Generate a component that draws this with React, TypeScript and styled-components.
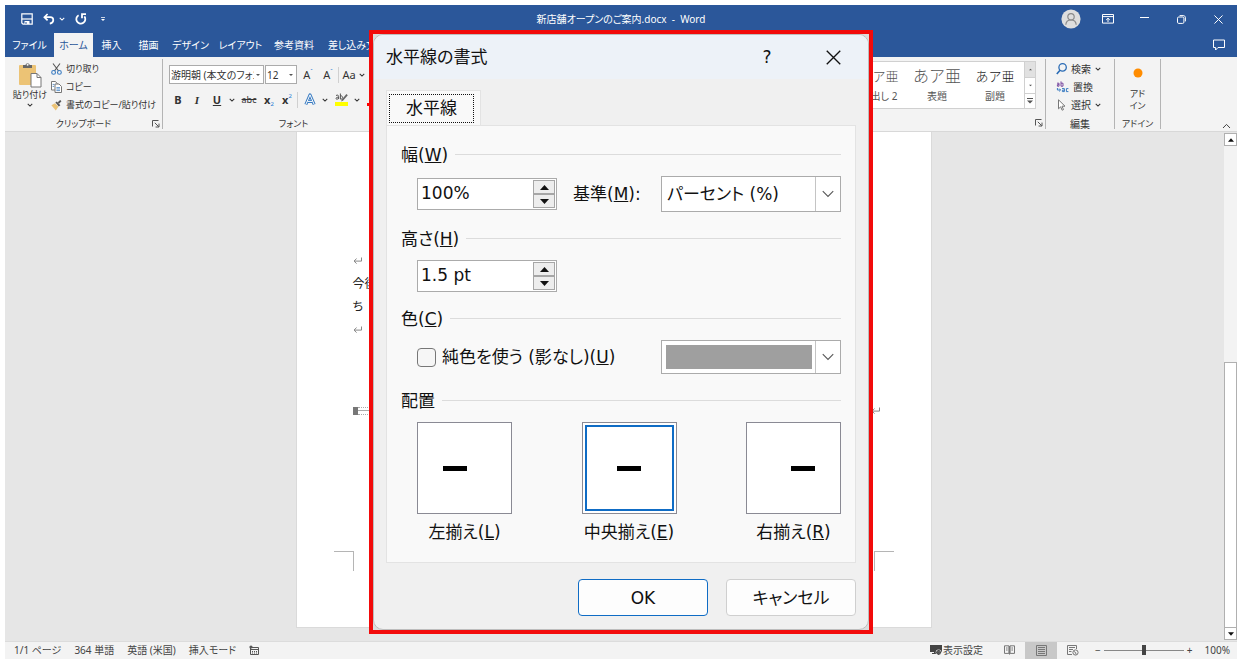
import React, { useState } from "react";
import styled, { createGlobalStyle, css } from "styled-components";

const GlobalStyle = createGlobalStyle`
  *, *::before, *::after { box-sizing: border-box; }
  body { margin: 0; background: #fff; }
  body, button, input, select {
    font-family: "Noto Sans", "Noto Sans CJK JP", sans-serif;
    font-feature-settings: "palt";
  }
  button { border: 0; padding: 0; background: none; color: inherit; font-size: inherit; line-height: inherit; }
  h1, h2, p { margin: 0; font-weight: 400; }
`;

const Desktop = styled.div`
  display: flex;
  min-height: 100vh;
  padding: 5px 7px 5px 5px;
`;

const AppWindow = styled.div`
  position: relative;
  flex: 1;
  min-width: 0;
  display: flex;
  flex-direction: column;
  background: #e6e6e6;
  color: #333;
  font-size: 10px;
  line-height: 14px;
  overflow: hidden;
`;

/* Title bar and tabs */
const Header = styled.header`
  background: #2b579a;
  color: #fff;
`;

const TitleRow = styled.div`
  display: grid;
  grid-template-columns: 1fr auto 1fr;
  align-items: center;
  height: 28px;
`;

const QuickAccess = styled.div`
  display: flex;
  align-items: center;
  gap: 10px;
  padding-left: 16px;
`;

const WindowControls = styled.div`
  display: flex;
  align-items: center;
  justify-content: flex-end;
`;

const IconButton = styled.button<{ $width?: number; $gap?: number }>`
  display: flex;
  align-items: center;
  justify-content: center;
  flex: none;
  gap: ${(p) => p.$gap ?? 0}px;
  width: ${(p) => (p.$width ? p.$width + "px" : "auto")};
`;

const Avatar = styled.button`
  display: flex;
  margin-right: 8px;
`;

const TabRow = styled.div`
  display: flex;
  align-items: stretch;
  height: 24px;
`;

const TabList = styled.nav`
  flex: 1;
  display: grid;
  grid-template-columns: 49px 39px 37px 37px 47px 53px 54px 62px;
`;

const RibbonTab = styled.button<{ $active?: boolean }>`
  display: flex;
  align-items: center;
  justify-content: center;
  white-space: nowrap;
  ${(p) => p.$active && css`background: #f3f3f3; color: #2b579a;`}
`;

/* Ribbon */
const Ribbon = styled.div`
  display: flex;
  height: 75px;
  padding-top: 2px;
  background: #f3f3f3;
  border-bottom: 1px solid #d8d8d8;
`;

const Group = styled.section<{ $width?: number; $line?: boolean }>`
  display: flex;
  flex-direction: column;
  flex: none;
  width: ${(p) => (p.$width ? p.$width + "px" : "auto")};
  margin-bottom: 2px;
  border-right: ${(p) => (p.$line ? "1px solid #b4b4b4" : "0")};
`;

const GroupBody = styled.div`
  flex: 1;
  display: flex;
`;

const GroupLabel = styled.div<{ $small?: boolean }>`
  display: grid;
  grid-template-columns: 1fr auto 1fr;
  align-items: center;
  height: 12px;
  font-size: ${(p) => (p.$small ? 9 : 10)}px;
  white-space: nowrap;
  span { grid-column: 2; }
  button { grid-column: 3; justify-self: end; padding-right: 2px; }
`;

const Spacer = styled.div`
  flex: 1;
`;

const PasteButton = styled.button`
  display: flex;
  flex-direction: column;
  align-items: center;
  width: 42px;
  margin-left: 4px;
  padding-top: 3px;
  font-size: 9px;
  white-space: nowrap;
`;

const CommandList = styled.div<{ $indent: number; $size: number }>`
  display: flex;
  flex-direction: column;
  padding: 1px 0 0 ${(p) => p.$indent}px;
  font-size: ${(p) => p.$size}px;
`;

const Command = styled.button<{ $spread?: boolean }>`
  display: flex;
  align-items: center;
  gap: 4px;
  height: 18px;
  white-space: nowrap;
`;

const FontPanel = styled.div`
  display: flex;
  flex-direction: column;
  padding: 6px 0 0 6px;
  gap: 6px;
`;

const FontRow = styled.div`
  display: flex;
  align-items: center;
  height: 19px;
`;

const Combo = styled.div<{ $width: number }>`
  display: flex;
  align-items: center;
  width: ${(p) => p.$width}px;
  height: 19px;
  margin-right: 1px;
  padding-right: 3px;
  border: 1px solid #ababab;
  background: #fff;
`;

const ComboInput = styled.input`
  flex: 1;
  width: 100%;
  min-width: 0;
  margin-right: 2px;
  padding: 0 0 0 1px;
  border: 0;
  outline: 0;
  background: transparent;
  color: #333;
  font-size: 10px;
`;

const Divider = styled.span`
  flex: none;
  width: 1px;
  height: 16px;
  background: #d0d0d0;
`;

const FormatButton = styled.button<{ $width: number }>`
  flex: none;
  width: ${(p) => p.$width}px;
  display: flex;
  align-items: center;
  justify-content: center;
  font-size: 11px;
  b, em, u { font-weight: 700; }
  s { font-size: 9px; }
  em { font-family: "Liberation Serif", serif; }
  sub, sup { font-size: 6px; color: #2b7cd3; line-height: 6px; }
  sub { align-self: flex-end; }
  sup { align-self: flex-start; }
`;

const FontColor = styled.span`
  width: 13px;
  border-bottom: 3px solid #f00;
  line-height: 10px;
`;

const Gallery = styled.div`
  display: flex;
  height: 48px;
  margin: 2px 9px 0 0;
  border: 1px solid #d0d0d0;
  background: #fff;
`;

const StyleItem = styled.button`
  display: flex;
  flex-direction: column;
  align-items: center;
  width: 58px;
  padding-top: 4px;
  white-space: nowrap;
  color: #555;
`;

const StyleSample = styled.span<{ $size: number; $dark?: boolean }>`
  height: 23px;
  font-size: ${(p) => p.$size}px;
  line-height: 20px;
  font-weight: 300;
  font-feature-settings: normal;
  color: ${(p) => (p.$dark ? "#222" : "#555")};
`;

const GalleryScroll = styled.div`
  display: grid;
  grid-template-rows: 1fr 1fr 1fr;
  width: 11px;
  border-left: 1px solid #d0d0d0;
  button { display: flex; align-items: center; justify-content: center; }
  button + button { border-top: 1px solid #d0d0d0; }
  button:first-child { background: #e1e1e1; }
`;

const AddIn = styled.button`
  display: flex;
  flex-direction: column;
  align-items: center;
  width: 100%;
  padding-top: 9px;
  font-size: 9px;
  line-height: 12px;
  svg { margin-bottom: 10px; }
`;

const CollapseArea = styled.div`
  display: flex;
  align-items: flex-end;
  justify-content: flex-end;
  width: 76px;
  padding: 0 6px 2px 0;
`;

/* Document */
const Workspace = styled.main`
  flex: 1;
  display: flex;
`;

const Canvas = styled.div`
  flex: 1;
  display: flex;
  justify-content: center;
  padding-bottom: 13px;
`;

const Page = styled.article`
  width: 636px;
  padding: 117px 0 56px;
  border: 1px solid #dadada;
  border-top: 0;
  background: #fff;
  color: #222;
  font-size: 12px;
  line-height: 23px;
`;

const DocLine = styled.p`
  display: flex;
  align-items: center;
  height: 23px;
  margin: 0 50px 0 56px;
`;

const RuleLine = styled(DocLine)`
  margin-top: 58px;
`;

const Handle = styled.span`
  flex: none;
  width: 5px;
  height: 8px;
  background: #777;
`;

const Rule = styled.span`
  flex: 1;
  height: 8px;
  background: linear-gradient(#aaa, #aaa) center / 100% 1px no-repeat;
  border-top: 1px dotted #aaa;
  border-bottom: 1px dotted #aaa;
`;

const CropMarks = styled.div`
  display: flex;
  justify-content: space-between;
  margin: 129px 37px 0;
`;

const CropMark = styled.span<{ $side: "left" | "right" }>`
  width: 20px;
  height: 20px;
  border-top: 1px solid #b5b5b5;
  border-${(p) => (p.$side === "left" ? "right" : "left")}: 1px solid #b5b5b5;
`;

const Scrollbar = styled.div`
  display: flex;
  flex-direction: column;
  width: 15px;
  padding: 1px 0 1px 2px;
`;

const ScrollArrow = styled.button`
  display: flex;
  align-items: center;
  justify-content: center;
  height: 13px;
  border: 1px solid #b0b0b0;
  background: #fff;
`;

const ScrollTrack = styled.div`
  flex: 218;
  background: #f3f3f3;
`;

const ScrollThumb = styled.div`
  flex: 266;
  border: 1px solid #b0b0b0;
  border-bottom: 0;
  background: #fff;
`;

/* Status bar */
const StatusBar = styled.footer`
  display: flex;
  align-items: center;
  height: 18px;
  padding: 0 7px 1px 9px;
  border-top: 1px solid #dcdcdc;
  background: #f3f3f3;
  color: #444;
  white-space: nowrap;
`;

const StatusItems = styled.div`
  flex: 1;
  display: flex;
  align-items: center;
  gap: 13px;
`;

const ViewButton = styled.button<{ $active?: boolean }>`
  display: flex;
  align-items: center;
  justify-content: center;
  width: 32px;
  height: 17px;
  background: ${(p) => (p.$active ? "#c8c8c8" : "transparent")};
`;

const DisplaySettings = styled.button`
  display: flex;
  align-items: center;
  gap: 1px;
  margin-right: 10px;
`;

const ZoomGroup = styled.div`
  display: flex;
  align-items: center;
  padding-left: 6px;
`;

const ZoomSlider = styled.input`
  appearance: none;
  width: 80px;
  height: 12px;
  margin: 0 3px;
  background: linear-gradient(#888, #888) center / 100% 1px no-repeat;
  &::-webkit-slider-thumb {
    appearance: none;
    width: 4px;
    height: 10px;
    background: #444;
  }
`;

const ZoomValue = styled.button`
  margin-left: 12px;
`;

/* Dialog */
const Overlay = styled.div`
  position: absolute;
  inset: 0;
  display: flex;
  justify-content: center;
  align-items: flex-start;
  padding-top: 25px;
`;

const Highlight = styled.div`
  width: 504px;
  border: 4px solid #f20a0a;
  background: #dcdcdc;
`;

const Dialog = styled.div`
  border: 1px solid #bdbdbd;
  border-radius: 10px;
  background: #f0f0f0;
  color: #111;
  font-size: 17px;
  line-height: 24px;
  overflow: hidden;
  &, button, input, select {
    font-family: "DejaVu Sans", "Noto Sans CJK JP", sans-serif;
  }
`;

const DialogTitle = styled.div`
  display: flex;
  align-items: center;
  height: 44px;
  padding: 0 2px 0 12px;
  background: #edf2f8;
  h1 { flex: 1; font-size: 17px; }
`;

const DialogTabs = styled.div`
  display: flex;
  padding: 11px 12px 0;
`;

const DialogTab = styled.button`
  width: 95px;
  height: 35px;
  padding: 3px 6px 2px 2px;
  border: 1px solid #e3e3e3;
  border-bottom: 0;
  background: #f9f9f9;
  span {
    display: block;
    height: 29px;
    border: 1px dotted #111;
    line-height: 27px;
  }
`;

const Panel = styled.div`
  display: flex;
  flex-direction: column;
  gap: 15px;
  margin: 0 12px;
  padding: 17px 14px 18px;
  border: 1px solid #e3e3e3;
  background: #f9f9f9;
`;

const SectionTitle = styled.h2`
  display: flex;
  align-items: center;
  gap: 7px;
  height: 24px;
  margin-bottom: 9px;
  font-size: 17px;
  &::after {
    content: "";
    flex: 1;
    height: 1px;
    margin-bottom: 2px;
    background: #dcdcdc;
  }
`;

const FieldRow = styled.div`
  display: flex;
  align-items: center;
  padding-left: 16px;
`;

const Spinner = styled.div`
  display: flex;
  width: 140px;
  height: 32px;
  padding: 1px;
  border: 1px solid #ababab;
  background: #fff;
`;

const SpinnerInput = styled.input`
  flex: 1;
  min-width: 0;
  padding: 0 2px 2px;
  border: 0;
  outline: 0;
  background: transparent;
  color: #111;
  font-size: 17px;
`;

const SpinnerArrows = styled.div`
  display: grid;
  grid-template-rows: 1fr 1fr;
  width: 22px;
  button {
    display: flex;
    align-items: center;
    justify-content: center;
    border: 1px solid #a6a6a6;
    background: #ededed;
  }
`;

const FieldLabel = styled.label`
  flex: 1;
  padding-left: 16px;
`;

const DropFrame = styled.div<{ $height: number }>`
  position: relative;
  display: flex;
  width: 180px;
  height: ${(p) => p.$height}px;
  border: 1px solid #ababab;
  background: #fff;
`;

const Select = styled.select`
  appearance: none;
  width: 100%;
  padding: 0 26px 0 5px;
  border: 0;
  outline: 0;
  background: transparent;
  color: #111;
  font-size: 17px;
`;

const DropArrow = styled.span`
  position: absolute;
  top: 0;
  right: 0;
  bottom: 0;
  display: flex;
  align-items: center;
  justify-content: center;
  width: 25px;
  border-left: 1px solid #c4c4c4;
  pointer-events: none;
`;

const ColorButton = styled.button`
  flex: 1;
  padding: 4px 28px 4px 4px;
  span { display: block; height: 100%; background: #9f9f9f; }
`;

const CheckLabel = styled.label`
  flex: 1;
  display: flex;
  align-items: center;
  gap: 6px;
  white-space: nowrap;
`;

const Checkbox = styled.input`
  appearance: none;
  width: 19px;
  height: 19px;
  margin: 0;
  border: 1px solid #777;
  border-radius: 4px;
  background: #f6f6f6;
  &:checked { background: #0067c0; }
`;

const AlignRow = styled.div`
  display: flex;
  justify-content: space-between;
  padding-left: 16px;
`;

const AlignOption = styled.label`
  display: flex;
  flex-direction: column;
  align-items: center;
  gap: 6px;
  width: 95px;
  white-space: nowrap;
`;

const HiddenRadio = styled.input`
  position: absolute;
  opacity: 0;
`;

const AlignBox = styled.span<{ $align: string; $selected: boolean }>`
  display: flex;
  align-items: center;
  justify-content: ${(p) => p.$align};
  width: 95px;
  height: 92px;
  padding: 0 25px;
  border: 1px solid #8a8a94;
  background: #fff;
  ${(p) => p.$selected && css`
    outline: 2px solid #0f6cc5;
    outline-offset: -5px;
  `}
  &::before {
    content: "";
    width: 24px;
    height: 5px;
    background: #000;
  }
`;

const DialogFooter = styled.div`
  display: flex;
  justify-content: flex-end;
  gap: 18px;
  padding: 16px 12px 13px;
`;

const PushButton = styled.button<{ $primary?: boolean }>`
  width: 130px;
  height: 37px;
  border: 1px solid ${(p) => (p.$primary ? "#0f6cc5" : "#cfcfcf")};
  border-radius: 4px;
  background: #fdfdfd;
`;

/* Icons */
const Chevron = ({ w = 6, color = "currentColor" }: { w?: number; color?: string }) => (
  <svg width={w} height={w} viewBox="0 0 8 8" fill="none" stroke={color} strokeWidth={w > 8 ? 0.6 : 1.4}>
    <path d="M1 2.4 4 5.4 7 2.4" />
  </svg>
);

const Triangle = ({ up, w = 5 }: { up?: boolean; w?: number }) => (
  <svg width={w} height={w} viewBox="0 0 10 10" fill={w < 5 ? "#555" : "#111"}>
    <path d={up ? "M5 2.2 10 7.8H0z" : "M5 7.8 0 2.2h10z"} />
  </svg>
);

const SaveIcon = () => (
  <svg width="12" height="12" viewBox="0 0 12 12" fill="none" stroke="#fff">
    <path d="M.8.8h10.4v10.4H2L.8 10z" strokeWidth="1.2" />
    <path d="M1 6h10" strokeWidth="1.2" />
    <path d="M3.5 8h5v3h-5z" fill="#fff" stroke="none" />
    <path d="M5 9v2" stroke="#2b579a" />
  </svg>
);

const UndoIcon = () => (
  <svg width="12" height="12" viewBox="0 0 12 12" fill="none" stroke="#fff" strokeWidth="1.7">
    <path d="M4.6 1 1.4 4.2l3.2 3.2M1.6 4.2h5.6c4.2.2 4.2 5.4-.4 6.4" />
  </svg>
);

const RedoIcon = () => (
  <svg width="12" height="12" viewBox="0 0 12 12" fill="none" stroke="#fff" strokeWidth="1.8">
    <path d="M3.6 2.2A4.5 4.5 0 1 0 9.4 3.4" />
    <path d="M11 1.2H7v4" />
  </svg>
);

const CustomizeIcon = () => (
  <svg width="4" height="6" viewBox="0 0 5 7" fill="#fff">
    <path d="M0 1h5v1H0zM0 3.6h5L2.5 6z" />
  </svg>
);

const AvatarIcon = () => (
  <svg width="20" height="20" viewBox="0 0 20 20" fill="none" stroke="#8a8a8a" strokeWidth="1.2">
    <circle cx="10" cy="10" r="9.6" fill="#dedede" stroke="none" />
    <circle cx="10" cy="7.8" r="3.2" />
    <path d="M4.8 15.8c.4-6.4 10-6.4 10.4 0" />
  </svg>
);

const RibbonDisplayIcon = () => (
  <svg width="12" height="10" viewBox="0 0 12 10" fill="none" stroke="#fff">
    <path d="M.5.5h11v8.6H.5zM.5 2.6h11M6 8V4.4M4.2 5.9 6 4.2l1.8 1.7" />
  </svg>
);

const MinimizeIcon = () => (
  <svg width="9" height="9" viewBox="0 0 9 9" stroke="#fff"><path d="M0 2.5h9" /></svg>
);

const RestoreIcon = () => (
  <svg width="9" height="9" viewBox="0 0 9 9" fill="none" stroke="#fff">
    <rect x=".5" y="2" width="6.4" height="6.4" rx="1.2" />
    <path d="M2.6.6h3.6c1.4 0 2.2.8 2.2 2.2v3.6" />
  </svg>
);

const CloseIcon = ({ size = 9, color = "#fff" }: { size?: number; color?: string }) => (
  <svg width={size} height={size} viewBox="0 0 10 10" stroke={color} strokeWidth={size > 10 ? 0.9 : 1.1}>
    <path d="M.5.5l9 9M9.5.5l-9 9" />
  </svg>
);

const CommentIcon = () => (
  <svg width="12" height="12" viewBox="0 0 12 12" fill="none" stroke="#fff">
    <path d="M.5 1h11v7.5H5L2.6 11V8.5H.5z" />
  </svg>
);

const PasteIcon = () => (
  <svg width="24" height="26" viewBox="0 0 24 26">
    <rect x="1" y="3" width="17" height="20" rx="1" fill="#ecc375" />
    <path d="M5 6V3h2.4a2.3 2.3 0 0 1 4.4 0H14v3z" fill="#666" />
    <circle cx="9.6" cy="2.8" r="1" fill="#f3f3f3" />
    <path d="M13 11.5h6l4 4v9.5H13z" fill="#fff" stroke="#777" />
    <path d="M19 11.5v4h4" fill="none" stroke="#777" />
  </svg>
);

const CutIcon = () => (
  <svg width="11" height="12" viewBox="0 0 11 12" fill="none">
    <path d="M2 .5 7.6 8M9 .5 3.4 8" stroke="#555" strokeWidth="1.1" />
    <circle cx="2.6" cy="9.4" r="1.9" stroke="#3a7cc2" strokeWidth="1.1" />
    <circle cx="8.4" cy="9.4" r="1.9" stroke="#3a7cc2" strokeWidth="1.1" />
  </svg>
);

const CopyIcon = () => (
  <svg width="11" height="12" viewBox="0 0 11 12" fill="#fff" stroke="#777">
    <path d="M.5.5h4L6.5 3v6h-6z" />
    <path d="M4 3h4l2.5 2.5v6H4z" />
    <path d="M5.4 6.6h3.6M5.4 8h3.6M5.4 9.6h3.6" stroke="#3a7cc2" strokeWidth=".8" />
    <path d="M1.6 3.4h1.8M1.6 5.4h1.6" stroke="#3a7cc2" strokeWidth=".8" />
  </svg>
);

const BrushIcon = () => (
  <svg width="11" height="11" viewBox="0 0 11 11">
    <path d="M.4 5.2 4 3.2l3.4 3.6L4.8 10.6z" fill="#ecc375" />
    <path d="m4.4 2.6 1.4-1 3.6 3.6-1.6 1.2z" fill="#555" />
    <path d="m7.4 3 2.4-2.4" stroke="#555" strokeWidth="1.8" />
  </svg>
);

const LauncherIcon = () => (
  <svg width="8" height="8" viewBox="0 0 8 8" fill="none" stroke="#555">
    <path d="M.5 6.5v-6h6M2.8 2.8l4 4M7 3.6V7H3.6" />
  </svg>
);

const TextEffectIcon = () => (
  <svg width="12" height="13" viewBox="0 0 12 13" fill="none" strokeLinejoin="round">
    <path d="M1.8 11.5 6 1.8l4.2 9.7M3.4 8.4h5.2" stroke="#3a7cc2" strokeWidth="3" />
    <path d="M1.8 11.5 6 1.8l4.2 9.7M3.4 8.4h5.2" stroke="#fff" strokeWidth="1" />
  </svg>
);

const HighlighterIcon = () => (
  <svg width="13" height="15" viewBox="0 0 13 15">
    <rect x="0" y="10" width="13" height="4" fill="#ffff00" />
    <path d="M1 3.5c2-1 2.6 0 2.6 1v2.6M3.6 5.2C.4 5 .6 7.4 2 7.2c.8 0 1.6-.8 1.6-1.4M5.4 1.5v5.6c2.8.6 2.8-4 0-3.2" fill="none" stroke="#555" />
    <path d="m6 9.4 1-2.2L11.4 2l1.4 1.2-4.6 5.4z" fill="#666" />
  </svg>
);

const SearchIcon = () => (
  <svg width="11" height="12" viewBox="0 0 11 12" fill="none" stroke="#2b6cb5" strokeWidth="1.3">
    <circle cx="6.6" cy="4.4" r="3.7" /><path d="M4 7.2.8 11" strokeWidth="1.6" />
  </svg>
);

const ReplaceIcon = () => (
  <svg width="13" height="12" viewBox="0 0 13 12" fill="none" strokeWidth="1">
    <path d="M1 2.2h2v3H1.4v-1.6H3M5 .4v4.8h2v-3H5" stroke="#7a4aa0" />
    <path d="M1.4 7v2h3M3.2 7.6l1.4 1.4-1.4 1.4" stroke="#3a7cc2" />
    <path d="M6 7.6h2.4v3H6.4V9.2h2M12.4 7.6h-2v3h2" stroke="#3a7cc2" />
  </svg>
);

const CursorIcon = () => (
  <svg width="11" height="12" viewBox="0 0 11 12" fill="#fff" stroke="#777">
    <path d="M2.5.8v9l2.2-2 1.4 3.4 1.4-.6L6 7.2h3z" />
  </svg>
);

const ReturnMark = () => (
  <svg width="10" height="8" viewBox="0 0 10 8" fill="none" stroke="#888">
    <path d="M8.5.5v3.6H1M3.6 1.6 1 4.1l2.6 2.5" />
  </svg>
);

const MacroIcon = () => (
  <svg width="11" height="11" viewBox="0 0 11 11" fill="none" stroke="#555">
    <path d="M1.5 2.5h8v7h-8zM1.5 4.5h8M3 6.5h1M5 6.5h1M7 6.5h1M3 8h1M5 8h1M7 8h1" />
    <circle cx="2" cy="2" r="1.6" fill="#555" stroke="none" />
  </svg>
);

const MonitorIcon = () => (
  <svg width="12" height="12" viewBox="0 0 12 12">
    <path d="M0 1h12v7H7v2H2V9h2V8H0z" fill="#444" />
    <circle cx="8.6" cy="8.4" r="2.9" fill="#f3f3f3" />
    <circle cx="8.6" cy="8.4" r="1.7" fill="none" stroke="#444" strokeWidth="1.3" />
    <path d="M8.6 5.8v5.2M6 8.4h5.2" stroke="#444" strokeWidth=".8" />
  </svg>
);

const BookIcon = () => (
  <svg width="11" height="10" viewBox="0 0 11 10" fill="none" stroke="#777">
    <path d="M.5.8h4.4v7.6H.5zM6.1.8h4.4v7.6H6.1zM5.5 1v8.6M2 3h1.6M2 5h1.6M7.4 3H9M7.4 5H9" />
  </svg>
);

const PrintLayoutIcon = () => (
  <svg width="11" height="11" viewBox="0 0 11 11" fill="none" stroke="#777">
    <path d="M.5.5h10v10H.5zM2 2.5h7M2 4.5h7M2 6.5h7M2 8.5h7" />
  </svg>
);

const WebLayoutIcon = () => (
  <svg width="12" height="11" viewBox="0 0 12 11" fill="none" stroke="#777">
    <path d="M5 9.5H.5v-9h9V4M2 2.5h6M2 4.5h4M2 6.5h2.5" />
    <circle cx="8.5" cy="7.5" r="2.6" /><path d="M7 6.5l1.6 1 .4 2" />
  </svg>
);

const ribbonTabs = ["ファイル", "ホーム", "挿入", "描画", "デザイン", "レイアウト", "参考資料", "差し込み文"];

const alignments = [
  { id: "left", text: "左揃え", accessKey: "L", justify: "flex-start" },
  { id: "center", text: "中央揃え", accessKey: "E", justify: "center" },
  { id: "right", text: "右揃え", accessKey: "R", justify: "flex-end" },
];

const Key = ({ children }: { children: string }) => <>(<u>{children}</u>)</>;

const NumberField = ({ label, initial }: { label: string; initial: string }) => {
  const [value, setValue] = useState(initial);
  const step = (d: number) => setValue((v) => v.replace(/^[\d.]+/, (n) => String(Math.max(0, Number(n) + d))));
  return (
    <Spinner>
      <SpinnerInput aria-label={label} value={value} onChange={(e) => setValue(e.target.value)} />
      <SpinnerArrows>
        <button aria-label={`${label} +`} onClick={() => step(1)}><Triangle up w={9} /></button>
        <button aria-label={`${label} -`} onClick={() => step(-1)}><Triangle w={9} /></button>
      </SpinnerArrows>
    </Spinner>
  );
};

function RuleDialog() {
  const [align, setAlign] = useState("center");
  return (
    <Dialog role="dialog" aria-labelledby="dialog-title">
      <DialogTitle>
        <h1 id="dialog-title">水平線の書式</h1>
        <IconButton $width={66}>?</IconButton>
        <IconButton $width={66} aria-label="閉じる"><CloseIcon size={15} color="#111" /></IconButton>
      </DialogTitle>
      <DialogTabs role="tablist">
        <DialogTab role="tab" aria-selected><span>水平線</span></DialogTab>
      </DialogTabs>
      <Panel>
        <section>
          <SectionTitle><span>幅<Key>W</Key></span></SectionTitle>
          <FieldRow>
            <NumberField label="幅" initial="100%" />
            <FieldLabel htmlFor="basis">基準<Key>M</Key>:</FieldLabel>
            <DropFrame $height={36}>
              <Select id="basis"><option>パーセント (%)</option></Select>
              <DropArrow><Chevron w={14} color="#555" /></DropArrow>
            </DropFrame>
          </FieldRow>
        </section>
        <section>
          <SectionTitle><span>高さ<Key>H</Key></span></SectionTitle>
          <FieldRow><NumberField label="高さ" initial="1.5 pt" /></FieldRow>
        </section>
        <section>
          <SectionTitle><span>色<Key>C</Key></span></SectionTitle>
          <FieldRow>
            <CheckLabel>
              <Checkbox type="checkbox" />
              <span>純色を使う (影なし)<Key>U</Key></span>
            </CheckLabel>
            <DropFrame $height={34}>
              <ColorButton aria-label="色" aria-haspopup="listbox"><span /></ColorButton>
              <DropArrow><Chevron w={14} color="#555" /></DropArrow>
            </DropFrame>
          </FieldRow>
        </section>
        <section>
          <SectionTitle><span>配置</span></SectionTitle>
          <AlignRow>
            {alignments.map((a) => (
              <AlignOption key={a.id}>
                <HiddenRadio type="radio" name="align" checked={align === a.id} onChange={() => setAlign(a.id)} />
                <AlignBox $align={a.justify} $selected={align === a.id} />
                <span>{a.text}<Key>{a.accessKey}</Key></span>
              </AlignOption>
            ))}
          </AlignRow>
        </section>
      </Panel>
      <DialogFooter>
        <PushButton $primary>OK</PushButton>
        <PushButton>キャンセル</PushButton>
      </DialogFooter>
    </Dialog>
  );
}

function RibbonBar() {
  return (
    <Ribbon>
      <Group $width={158} $line>
        <GroupBody>
          <PasteButton><PasteIcon />貼り付け<Chevron /></PasteButton>
          <CommandList $indent={0} $size={9}>
            <Command><CutIcon />切り取り</Command>
            <Command><CopyIcon />コピー</Command>
            <Command><BrushIcon />書式のコピー/貼り付け</Command>
          </CommandList>
        </GroupBody>
        <GroupLabel $small><span>クリップボード</span><IconButton aria-label="クリップボード"><LauncherIcon /></IconButton></GroupLabel>
      </Group>
      <Group $width={262} $line>
        <GroupBody>
          <FontPanel>
            <FontRow>
              <Combo $width={95}><ComboInput aria-label="フォント" defaultValue="游明朝 (本文のフォント)" /><Triangle w={4} /></Combo>
              <Combo $width={32}><ComboInput aria-label="フォント サイズ" defaultValue="12" /><Triangle w={4} /></Combo>
              <FormatButton $width={20}>A<sup>ˆ</sup></FormatButton>
              <FormatButton $width={20}>A<sup>ˇ</sup></FormatButton>
              <Divider />
              <FormatButton $width={20}>Aa</FormatButton>
              <Chevron />
            </FontRow>
            <FontRow>
              <FormatButton $width={18}><b>B</b></FormatButton>
              <FormatButton $width={20}><em>I</em></FormatButton>
              <FormatButton $width={20}><u>U</u></FormatButton>
              <IconButton $width={10} aria-label="下線"><Chevron /></IconButton>
              <FormatButton $width={24}><s>abc</s></FormatButton>
              <FormatButton $width={16}><b>x</b><sub>2</sub></FormatButton>
              <FormatButton $width={20}><b>x</b><sup>2</sup></FormatButton>
              <Divider />
              <FormatButton $width={24}><TextEffectIcon /></FormatButton>
              <Chevron />
              <FormatButton $width={26}><HighlighterIcon /></FormatButton>
              <Chevron />
              <FormatButton $width={26}><FontColor>A</FontColor></FormatButton>
            </FontRow>
          </FontPanel>
        </GroupBody>
        <GroupLabel $small><span>フォント</span></GroupLabel>
      </Group>
      <Spacer />
      <Group $line>
        <GroupBody>
          <Gallery>
            <StyleItem><StyleSample $size={13}>あア亜</StyleSample>見出し 2</StyleItem>
            <StyleItem><StyleSample $size={16}>あア亜</StyleSample>表題</StyleItem>
            <StyleItem><StyleSample $size={13} $dark>あア亜</StyleSample>副題</StyleItem>
            <GalleryScroll>
              <button aria-label="前の行"><Triangle up w={3} /></button>
              <button aria-label="次の行"><Triangle w={3} /></button>
              <button aria-label="その他"><CustomizeArrow /></button>
            </GalleryScroll>
          </Gallery>
        </GroupBody>
        <GroupLabel><IconButton aria-label="スタイル"><LauncherIcon /></IconButton></GroupLabel>
      </Group>
      <Group $width={69} $line>
        <GroupBody>
          <CommandList $indent={10} $size={10}>
            <Command><SearchIcon />検索<Chevron /></Command>
            <Command><ReplaceIcon />置換</Command>
            <Command><CursorIcon />選択<Chevron /></Command>
          </CommandList>
        </GroupBody>
        <GroupLabel><span>編集</span></GroupLabel>
      </Group>
      <Group $width={46} $line>
        <GroupBody>
          <AddIn>
            <svg width="10" height="10" viewBox="0 0 10 10"><circle cx="5" cy="5" r="4.5" fill="#ff8c00" /></svg>
            <span>アド</span>
            <span>イン</span>
          </AddIn>
        </GroupBody>
        <GroupLabel $small><span>アドイン</span></GroupLabel>
      </Group>
      <CollapseArea>
        <IconButton aria-label="リボンを折りたたむ">
          <svg width="9" height="6" viewBox="0 0 9 6" fill="none" stroke="#444"><path d="M1 5l3.5-3.6L8 5" /></svg>
        </IconButton>
      </CollapseArea>
    </Ribbon>
  );
}

function CustomizeArrow() {
  return (
    <svg width="6" height="7" viewBox="0 0 6 7" fill="#555">
      <path d="M0 1h6v1H0zM0 3.4h6L3 6.4z" />
    </svg>
  );
}

export default function App() {
  const [tab, setTab] = useState("ホーム");
  return (
    <Desktop>
      <GlobalStyle />
      <AppWindow>
        <Header>
          <TitleRow>
            <QuickAccess>
              <IconButton aria-label="上書き保存"><SaveIcon /></IconButton>
              <IconButton $width={22} $gap={4} aria-label="元に戻す"><UndoIcon /><Chevron /></IconButton>
              <IconButton $width={12} aria-label="やり直し"><RedoIcon /></IconButton>
              <IconButton $width={12} aria-label="カスタマイズ"><CustomizeIcon /></IconButton>
            </QuickAccess>
            <span>新店舗オープンのご案内.docx&nbsp; -&nbsp; Word</span>
            <WindowControls>
              <Avatar aria-label="アカウント"><AvatarIcon /></Avatar>
              <IconButton $width={37} aria-label="リボンの表示"><RibbonDisplayIcon /></IconButton>
              <IconButton $width={37} aria-label="最小化"><MinimizeIcon /></IconButton>
              <IconButton $width={37} aria-label="元のサイズ"><RestoreIcon /></IconButton>
              <IconButton $width={37} aria-label="閉じる"><CloseIcon /></IconButton>
            </WindowControls>
          </TitleRow>
          <TabRow>
            <TabList>
              {ribbonTabs.map((t) => (
                <RibbonTab key={t} $active={t === tab} onClick={() => setTab(t)}>{t}</RibbonTab>
              ))}
            </TabList>
            <IconButton $width={37} aria-label="コメント"><CommentIcon /></IconButton>
          </TabRow>
        </Header>
        <RibbonBar />
        <Workspace>
          <Canvas>
            <Page>
              <DocLine><ReturnMark /></DocLine>
              <DocLine>今後</DocLine>
              <DocLine>ち</DocLine>
              <DocLine><ReturnMark /></DocLine>
              <RuleLine><Handle /><Rule /><Handle /><ReturnMark /></RuleLine>
              <CropMarks><CropMark $side="left" /><CropMark $side="right" /></CropMarks>
            </Page>
          </Canvas>
          <Scrollbar>
            <ScrollArrow aria-label="上へ"><Triangle up w={6} /></ScrollArrow>
            <ScrollTrack />
            <ScrollThumb />
            <ScrollArrow aria-label="下へ"><Triangle w={6} /></ScrollArrow>
          </Scrollbar>
        </Workspace>
        <StatusBar>
          <StatusItems>
            <span>1/1 ページ</span>
            <span>364 単語</span>
            <span>英語 (米国)</span>
            <span>挿入モード</span>
            <MacroIcon />
          </StatusItems>
          <DisplaySettings><MonitorIcon />表示設定</DisplaySettings>
          <ViewButton aria-label="閲覧モード"><BookIcon /></ViewButton>
          <ViewButton $active aria-label="印刷レイアウト"><PrintLayoutIcon /></ViewButton>
          <ViewButton aria-label="Web レイアウト"><WebLayoutIcon /></ViewButton>
          <ZoomGroup>
            <IconButton>−</IconButton>
            <ZoomSlider type="range" aria-label="ズーム" defaultValue={50} />
            <IconButton>+</IconButton>
            <ZoomValue>100%</ZoomValue>
          </ZoomGroup>
        </StatusBar>
        <Overlay>
          <Highlight><RuleDialog /></Highlight>
        </Overlay>
      </AppWindow>
    </Desktop>
  );
}
